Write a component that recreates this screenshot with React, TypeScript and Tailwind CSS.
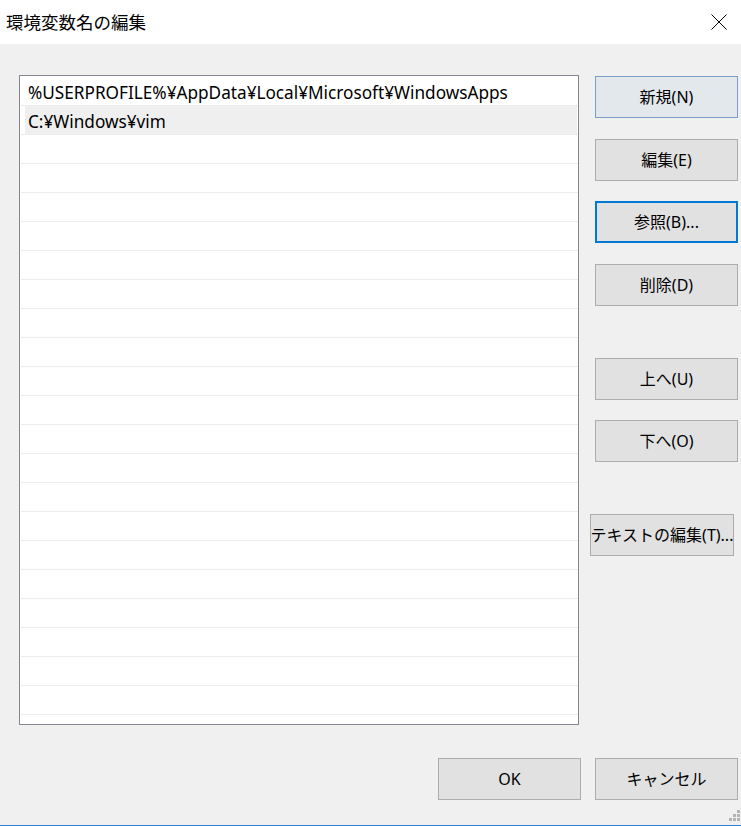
const font = { fontFamily: '"Noto Sans", "Noto Sans CJK JP", sans-serif' };

const entries = ['%USERPROFILE%¥AppData¥Local¥Microsoft¥WindowsApps', 'C:¥Windows¥vim'];
const rowCount = 23;

function Btn({
  label,
  variant = 'normal',
  className = '',
}: {
  label: string;
  variant?: 'normal' | 'hover' | 'focus';
  className?: string;
}) {
  const look =
    variant === 'hover'
      ? 'border border-[#7c9dc7] bg-[#e3e8ed]'
      : variant === 'focus'
        ? 'border-2 border-[#0078d7] bg-[#e1e1e1]'
        : 'border border-[#adadad] bg-[#e1e1e1]';
  return (
    <div
      className={`h-[42px] flex items-center justify-center text-[16px] text-black whitespace-nowrap ${look} ${className}`}
    >
      {label}
    </div>
  );
}

export default function App() {
  return (
    <div className="relative w-[741px] h-[826px] flex flex-col bg-[#f0f0f0] overflow-hidden" style={font}>
      {/* Title bar */}
      <div className="h-[44px] bg-white flex items-center justify-between pl-[6px] pr-[14px] shrink-0">
        <span className="text-[17.5px] text-black">環境変数名の編集</span>
        <svg width="16" height="16" viewBox="0 0 16 16">
          <path d="M0.5 0.5 L15.5 15.5 M15.5 0.5 L0.5 15.5" stroke="#000" strokeWidth="1" fill="none" />
        </svg>
      </div>

      {/* Body */}
      <div className="flex-1 flex flex-col pl-[19px] pt-[31px]">
        <div className="flex">
          {/* List */}
          <div className="w-[560px] h-[650px] border border-[#828790] bg-white pt-[1px] overflow-hidden">
            {Array.from({ length: rowCount }).map((_, i) => (
              <div key={i} className="h-[29px] ml-[1px] border-b border-[#ececec] flex">
                <div
                  className={`flex-1 flex items-center pt-[3px] text-[17.2px] text-black whitespace-nowrap ${
                    i === 1 ? 'bg-[#efefef] ml-[4px] mr-[1px] pl-[3px]' : 'pl-[7px]'
                  }`}
                >
                  {entries[i] ?? ''}
                </div>
              </div>
            ))}
          </div>

          {/* Side buttons */}
          <div className="flex flex-col pt-[1px] ml-[16px]">
            <Btn label="新規(N)" variant="hover" className="w-[143px]" />
            <Btn label="編集(E)" className="w-[143px] mt-[21px]" />
            <Btn label="参照(B)..." variant="focus" className="w-[143px] mt-[20px]" />
            <Btn label="削除(D)" className="w-[143px] mt-[21px]" />
            <Btn label="上へ(U)" className="w-[143px] mt-[52px]" />
            <Btn label="下へ(O)" className="w-[143px] mt-[20px]" />
            <Btn label="テキストの編集(T)..." className="w-[144px] -ml-[5px] mt-[52px]" />
          </div>
        </div>

        {/* Bottom buttons */}
        <div className="flex mt-[33px] pl-[419px] gap-[14px]">
          <Btn label="OK" className="w-[143px]" />
          <Btn label="キャンセル" className="w-[143px]" />
        </div>
      </div>

      <div className="h-[1px] bg-[#2b7bd0] shrink-0" />

      {/* Resize grip */}
      <div className="absolute right-[1px] bottom-[5px] grid grid-cols-3 gap-[1px]">
        {[0, 0, 1, 0, 1, 1, 1, 1, 1].map((on, i) => (
          <div key={i} className={`w-[3px] h-[3px] ${on ? 'bg-[#b4b4b4]' : ''}`} />
        ))}
      </div>
    </div>
  );
}
